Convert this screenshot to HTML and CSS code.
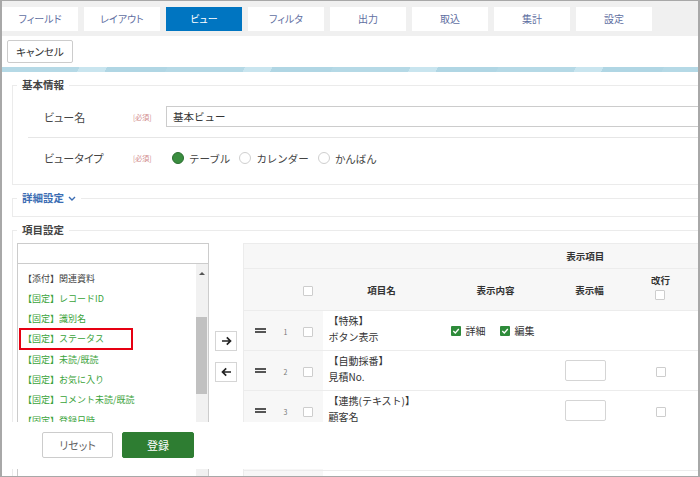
FILE: index.html
```html
<!DOCTYPE html>
<html lang="ja">
<head>
    <meta charset="UTF-8">
    <meta name="viewport" content="width=device-width, initial-scale=1.0">
    <title>ビュー設定</title>
    <link rel="stylesheet" href="styles.css">
</head>
<body>
    <div class="frame">
        <div class="tabs">
            <div class="tab">フィールド</div>
            <div class="tab">レイアウト</div>
            <div class="tab active">ビュー</div>
            <div class="tab">フィルタ</div>
            <div class="tab">出力</div>
            <div class="tab">取込</div>
            <div class="tab">集計</div>
            <div class="tab">設定</div>
        </div>
        <div class="toolbar">
            <button class="btn btn-cancel">キャンセル</button>
        </div>
        <div class="stripe"></div>

        <div class="content">
            <fieldset class="group">
                <legend>基本情報</legend>
                <div class="form-row form-row-name">
                    <span class="form-label">ビュー名</span>
                    <span class="req">[必須]</span>
                    <input class="text-input" type="text" value="基本ビュー">
                </div>
                <div class="form-row form-row-type">
                    <span class="form-label">ビュータイプ</span>
                    <span class="req">[必須]</span>
                    <div class="radio-group">
                        <span class="radio"><span class="radio-mark checked"></span>テーブル</span>
                        <span class="radio"><span class="radio-mark"></span>カレンダー</span>
                        <span class="radio"><span class="radio-mark"></span>かんばん</span>
                    </div>
                </div>
            </fieldset>

            <fieldset class="group">
                <legend class="legend-link">詳細設定
                    <svg class="chevron" width="8" height="5" viewBox="0 0 8 5"><path d="M1 1 L4 4 L7 1" fill="none" stroke="#3b6db3" stroke-width="1.4"/></svg>
                </legend>
                <div class="collapsed-body"></div>
            </fieldset>

            <fieldset class="group">
                <legend>項目設定</legend>
                <div class="field-picker">
                    <div class="picker-left">
                        <input class="search-input" type="text">
                        <div class="listbox">
                            <ul class="list-items">
                                <li class="list-item attach">【添付】関連資料</li>
                                <li class="list-item">【固定】レコードID</li>
                                <li class="list-item">【固定】識別名</li>
                                <li class="list-item"><span class="highlight">【固定】ステータス</span></li>
                                <li class="list-item">【固定】未読/既読</li>
                                <li class="list-item">【固定】お気に入り</li>
                                <li class="list-item">【固定】コメント未読/既読</li>
                                <li class="list-item">【固定】登録日時</li>
                            </ul>
                            <div class="scrollbar">
                                <span class="scroll-up"></span>
                                <span class="scroll-thumb"></span>
                            </div>
                        </div>
                    </div>

                    <div class="move-buttons">
                        <button class="move-btn">
                            <svg width="11" height="10" viewBox="0 0 11 10"><path d="M1 5 H9.5 M5.8 1.3 L9.5 5 L5.8 8.7" fill="none" stroke="#222" stroke-width="1.7"/></svg>
                        </button>
                        <button class="move-btn">
                            <svg width="11" height="10" viewBox="0 0 11 10"><path d="M10 5 H1.5 M5.2 1.3 L1.5 5 L5.2 8.7" fill="none" stroke="#222" stroke-width="1.7"/></svg>
                        </button>
                    </div>

                    <table class="field-table">
                        <colgroup>
                            <col class="c-handle"><col class="c-num"><col class="c-check"><col class="c-name">
                            <col class="c-content"><col class="c-width"><col class="c-break"><col class="c-extra">
                        </colgroup>
                        <thead>
                            <tr class="head-top">
                                <th colspan="4"></th>
                                <th colspan="4">表示項目</th>
                            </tr>
                            <tr class="head-sub">
                                <th></th>
                                <th></th>
                                <th><span class="checkbox"></span></th>
                                <th>項目名</th>
                                <th>表示内容</th>
                                <th>表示幅</th>
                                <th class="th-break"><span class="stack">改行<span class="checkbox"></span></span></th>
                                <th></th>
                            </tr>
                        </thead>
                        <tbody>
                            <tr>
                                <td class="cell-gray"><span class="handle"></span></td>
                                <td class="cell-gray num">1</td>
                                <td class="cell-gray"><span class="checkbox"></span></td>
                                <td class="name">【特殊】<br>ボタン表示</td>
                                <td>
                                    <span class="checks">
                                        <span class="check-item"><span class="check-on"><svg width="8" height="8" viewBox="0 0 8 8"><path d="M1.3 4 L3.3 6 L6.8 2" fill="none" stroke="#fff" stroke-width="1.3"/></svg></span>詳細</span>
                                        <span class="check-item"><span class="check-on"><svg width="8" height="8" viewBox="0 0 8 8"><path d="M1.3 4 L3.3 6 L6.8 2" fill="none" stroke="#fff" stroke-width="1.3"/></svg></span>編集</span>
                                    </span>
                                </td>
                                <td></td>
                                <td></td>
                                <td></td>
                            </tr>
                            <tr>
                                <td class="cell-gray"><span class="handle"></span></td>
                                <td class="cell-gray num">2</td>
                                <td class="cell-gray"><span class="checkbox"></span></td>
                                <td class="name">【自動採番】<br>見積No.</td>
                                <td></td>
                                <td><span class="width-input"></span></td>
                                <td><span class="checkbox"></span></td>
                                <td></td>
                            </tr>
                            <tr>
                                <td class="cell-gray"><span class="handle"></span></td>
                                <td class="cell-gray num">3</td>
                                <td class="cell-gray"><span class="checkbox"></span></td>
                                <td class="name">【連携(テキスト)】<br>顧客名</td>
                                <td></td>
                                <td><span class="width-input"></span></td>
                                <td><span class="checkbox"></span></td>
                                <td></td>
                            </tr>
                            <tr>
                                <td class="cell-gray"><span class="handle"></span></td>
                                <td class="cell-gray num"></td>
                                <td class="cell-gray"><span class="checkbox"></span></td>
                                <td class="name"></td>
                                <td></td>
                                <td><span class="width-input"></span></td>
                                <td><span class="checkbox"></span></td>
                                <td></td>
                            </tr>
                            <tr>
                                <td class="cell-gray"></td>
                                <td class="cell-gray num"></td>
                                <td class="cell-gray"></td>
                                <td class="name"></td>
                                <td></td>
                                <td></td>
                                <td></td>
                                <td></td>
                            </tr>
                        </tbody>
                    </table>
                </div>
            </fieldset>
        </div>

        <div class="footer">
            <button class="btn btn-reset">リセット</button>
            <button class="btn btn-submit">登録</button>
        </div>
    </div>
</body>
</html>
```

FILE: styles.css
```css
* {
    box-sizing: border-box;
}
body {
    margin: 0;
    font-family: "Noto Sans CJK JP", "Noto Sans", sans-serif;
    font-feature-settings: "palt" 1;
    color: #333;
    background: #fff;
}
.frame {
    position: relative;
    width: 700px;
    height: 477px;
    border: 1px solid #a8a8a8;
    border-left-width: 2px;
    border-right-width: 2px;
    overflow: hidden;
}

/* tabs */
.tabs {
    display: flex;
    gap: 6px;
    background: #f0f0f0;
    padding: 6px 0 5px;
}
.tab {
    flex: none;
    width: 76px;
    height: 24px;
    line-height: 24px;
    text-align: center;
    background: #fff;
    color: #5f6fa2;
    font-size: 10px;
}
.tab.active {
    background: #0075c1;
    color: #fff;
}

.toolbar {
    padding: 4px 5px;
}
.btn {
    font-family: inherit;
    font-feature-settings: "palt" 1;
    background: #fff;
    border: 1px solid #ccc;
    border-radius: 2px;
    padding: 0;
    cursor: pointer;
}
.btn-cancel {
    display: block;
    width: 66px;
    height: 23px;
    font-size: 10.5px;
    color: #333;
}
.stripe {
    height: 5px;
    background: repeating-linear-gradient(115deg, #b5d9e6 0 70px, #c9e5ef 70px 95px, #b0d6e4 95px 150px);
}

/* fieldsets */
.content {
    width: 800px;
    padding-left: 10px;
}
.group {
    margin: 6px 0 0;
    padding: 0;
    border: 1px solid #ebebeb;
    min-width: 0;
}
.group legend {
    margin-left: 4px;
    padding: 0 5px 2px;
    font-size: 10.5px;
    font-weight: 700;
    line-height: 13px;
    color: #444;
}
.group legend.legend-link {
    color: #3b6db3;
}
.chevron {
    margin-left: 2px;
    vertical-align: 1px;
}
.collapsed-body {
    height: 10px;
}

.form-row {
    display: flex;
    align-items: center;
    margin-left: 15px;
}
.form-row-name {
    padding: 13px 0 10px 16px;
    border-bottom: 1px solid #e6e6e6;
}
.form-row-type {
    padding: 12px 0 18px 16px;
}
.form-label {
    width: 89px;
    font-size: 11px;
    color: #444;
}
.req {
    width: 33px;
    font-size: 7px;
    color: #d08a8a;
}
.text-input {
    width: 600px;
    height: 21px;
    border: 1px solid #ccc;
    padding: 0 6px;
    font-family: inherit;
    font-size: 10.5px;
    color: #333;
}
.radio-group {
    display: flex;
    align-items: center;
    height: 14px;
    padding-left: 6px;
    font-size: 10.5px;
    font-feature-settings: normal;
    color: #444;
}
.radio {
    display: flex;
    align-items: center;
    margin-right: 9px;
}
.radio-mark {
    width: 12px;
    height: 12px;
    border: 1px solid #cfcfcf;
    border-radius: 50%;
    margin-right: 5px;
    background: #fff;
}
.radio-mark.checked {
    border-color: #2b6e30;
    background: #3a8d3f;
}

/* field picker */
.field-picker {
    display: flex;
    align-items: flex-start;
    padding: 5px 0 0 4px;
}
.picker-left {
    flex: none;
    width: 192px;
}
.search-input {
    display: block;
    width: 100%;
    height: 21px;
    border: 1px solid #ccc;
}
.listbox {
    display: flex;
    height: 240px;
    border: 1px solid #ccc;
    border-top: none;
}
.list-items {
    flex: 1;
    list-style: none;
    margin: 0;
    padding: 4px 0 0 5px;
}
.list-item {
    height: 20.3px;
    display: flex;
    align-items: center;
    font-size: 9px;
    font-feature-settings: normal;
    color: #3aa33a;
    white-space: nowrap;
}
.list-item.attach {
    color: #444;
}
.highlight {
    border: 2px solid #e60012;
    margin-left: -4px;
    padding: 0 27px 0 2px;
    line-height: 18px;
}
.scrollbar {
    flex: none;
    width: 12px;
    background: #f1f1f1;
    display: flex;
    flex-direction: column;
    align-items: center;
}
.scroll-up {
    margin-top: 8px;
    border-left: 3px solid transparent;
    border-right: 3px solid transparent;
    border-bottom: 3px solid #555;
}
.scroll-thumb {
    margin-top: 42px;
    width: 11px;
    height: 77px;
    background: #c1c1c1;
    align-self: flex-start;
}

.move-buttons {
    flex: none;
    display: flex;
    flex-direction: column;
    gap: 11px;
    margin: 88px 6px 0;
}
.move-btn {
    width: 22px;
    height: 20px;
    border: 1px solid #d5d5d5;
    background: #fff;
    display: flex;
    align-items: center;
    justify-content: center;
    padding: 0;
}

/* table */
.field-table {
    flex: none;
    width: 487px;
    table-layout: fixed;
    border-collapse: collapse;
    border: 1px solid #ececec;
    font-size: 9.5px;
    color: #333;
}
.c-handle { width: 34px; }
.c-num { width: 16px; }
.c-check { width: 29px; }
.c-name { width: 118px; }
.c-content { width: 110px; }
.c-width { width: 78px; }
.c-break { width: 64px; }
.c-extra { width: 38px; }
.field-table th,
.field-table td {
    padding: 0;
    text-align: center;
    vertical-align: middle;
    border-bottom: 1px solid #ececec;
}
.field-table thead th {
    background: #f7f7f7;
    font-weight: 700;
}
.head-top th {
    height: 25px;
}
.head-sub th {
    height: 42px;
}
.th-break {
    padding-bottom: 6px !important;
}
.stack {
    display: inline-flex;
    flex-direction: column;
    align-items: center;
    gap: 3px;
}
.field-table tbody td {
    height: 40px;
    background: #fff;
}
.field-table tbody td.cell-gray {
    background: #f7f7f7;
}
.num {
    font-size: 7px;
    color: #777;
    padding-top: 3px !important;
}
.field-table td.name {
    text-align: left;
    padding: 0 0 3px 6px;
    font-size: 10px;
    font-feature-settings: normal;
    line-height: 16px;
    color: #333;
}
.checkbox {
    display: inline-block;
    width: 10px;
    height: 10px;
    border: 1px solid #cdcdcd;
    border-radius: 1px;
    background: #fff;
    vertical-align: middle;
}
.handle {
    display: block;
    width: 11px;
    height: 5px;
    margin: 0 auto;
    border-top: 2px solid #555;
    border-bottom: 2px solid #555;
}
.checks {
    display: inline-flex;
    gap: 14px;
    font-size: 10px;
    margin-left: -6px;
}
.check-item {
    display: inline-flex;
    align-items: center;
    gap: 5px;
}
.check-on {
    display: inline-flex;
    align-items: center;
    justify-content: center;
    width: 10px;
    height: 10px;
    background: #2e8b3a;
    border-radius: 1px;
}
.width-input {
    display: inline-block;
    width: 41px;
    height: 21px;
    border: 1px solid #d5d5d5;
    border-radius: 2px;
    vertical-align: middle;
    margin-right: 8px;
}

/* sticky footer over the list */
.footer {
    position: absolute;
    left: 0;
    right: 0;
    top: 421px;
    height: 47px;
    background: #fff;
    display: flex;
    align-items: flex-start;
    gap: 9px;
    padding: 10px 0 0 40px;
}
.btn-reset {
    width: 71px;
    height: 26px;
    font-size: 11px;
    color: #666;
}
.btn-submit {
    width: 72px;
    height: 26px;
    font-size: 11px;
    color: #fff;
    background: #2e7d32;
    border-color: #2e7d32;
}
```
